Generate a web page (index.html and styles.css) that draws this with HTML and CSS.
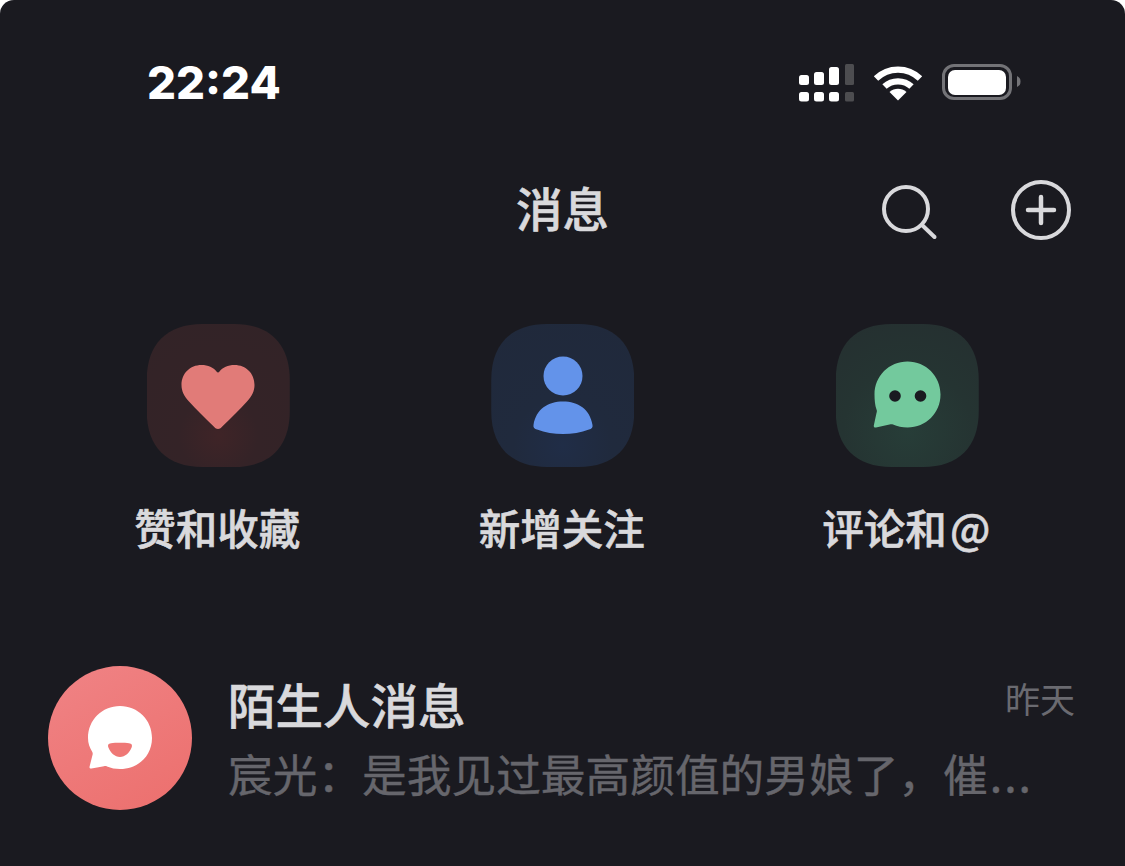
FILE: index.html
```html
<!DOCTYPE html>
<html lang="zh-CN">
<head>
<meta charset="utf-8">
<title>消息</title>
<link rel="stylesheet" href="styles.css">
</head>
<body>
<div class="app">
  <div class="status">
    <span class="time">22:24</span>
    <div class="status-icons">
      <svg class="sig" width="56" height="38" viewBox="0 0 56 38">
        <g fill="#fff">
          <rect x="0" y="11" width="10" height="10" rx="2.500"/><rect x="0" y="28" width="10" height="9.500" rx="2.500"/>
          <rect x="15" y="8" width="10" height="13" rx="2.500"/><rect x="15" y="28" width="10" height="9.500" rx="2.500"/>
          <rect x="30" y="3" width="10" height="18" rx="2.500"/><rect x="30" y="28" width="10" height="9.500" rx="2.500"/>
        </g>
        <g fill="#4d4d50">
          <rect x="46" y="0" width="9" height="21" rx="1.500"/><rect x="46" y="28" width="9" height="9.500" rx="1.500"/>
        </g>
      </svg>
      <svg class="wifi" width="50" height="36" viewBox="0 0 50 36">
        <g fill="none" stroke="#fff" stroke-width="6.400">
          <path d="M3 13.500C15.500 1.600 34.500 1.600 47 13.500"/>
          <path d="M11.500 21.500C19 14.600 31 14.600 38.500 21.500"/>
        </g>
        <path d="M25 35.500L16.500 27C21.500 22.600 28.500 22.600 33.500 27Z" fill="#fff"/>
      </svg>
      <svg class="batt" width="79" height="38" viewBox="0 0 79 38">
        <rect x="1.500" y="1.500" width="67" height="33" rx="10.500" fill="none" stroke="#737377" stroke-width="3"/>
        <rect x="6" y="6" width="58" height="25" rx="7" fill="#fff"/>
        <path d="M75 12C78 13.500 78.500 15 78.500 17.500S78 21.500 75 23Z" fill="#737377"/>
      </svg>
    </div>
  </div>

  <header class="nav">
    <h1 class="title">消息</h1>
    <svg class="ic-search" width="58" height="58" viewBox="0 0 58 58">
      <circle cx="24" cy="25" r="22" fill="none" stroke="#d9d9dc" stroke-width="4"/>
      <path d="M40 41L52.500 53" stroke="#d9d9dc" stroke-width="4" stroke-linecap="round"/>
    </svg>
    <svg class="ic-plus" width="60" height="60" viewBox="0 0 60 60">
      <circle cx="30" cy="30" r="28" fill="none" stroke="#d9d9dc" stroke-width="4"/>
      <path d="M17 30H43M30 17V43" stroke="#d9d9dc" stroke-width="4.500" stroke-linecap="round"/>
    </svg>
  </header>

  <section class="shortcuts">
    <div class="shortcut">
      <div class="tile tile-red">
        <svg class="glyph-heart" width="74" height="66" viewBox="0 0 74 66">
          <path d="M37 65C35.500 65 34.300 64.200 33 62.800C24 54 15 45.500 8 37.500C3 32 .500 27 .500 21C.500 9.500 9 1 20.500 1C27 1 32.500 3.500 35.500 7.500C36.500 8.800 37.500 8.800 38.500 7.500C41.500 3.500 47 1 53.500 1C65 1 73.500 9.500 73.500 21C73.500 27 71 32 66 37.500C59 45.500 50 54 41 62.800C39.700 64.200 38.500 65 37 65Z" fill="#e17b78"/>
        </svg>
      </div>
      <span class="label">赞和收藏</span>
    </div>
    <div class="shortcut">
      <div class="tile tile-blue">
        <svg width="60" height="80" viewBox="0 0 60 80">
          <circle cx="30" cy="20" r="19.500" fill="#6393ea"/>
          <path d="M.500 69C3 53 15 45.500 30 45.500S57 53 59.500 69C60 71.500 58.500 73 56 73.500C40 79.500 20 79.500 4 73.500C1.500 73 0 71.500 .500 69Z" fill="#6393ea"/>
        </svg>
      </div>
      <span class="label">新增关注</span>
    </div>
    <div class="shortcut">
      <div class="tile tile-green">
        <svg class="glyph-chat" width="68" height="68" viewBox="0 0 68 68">
          <path d="M34.500 .500C53 .500 67.500 15 67.500 33.500S53 66.500 34.500 66.500C29 66.500 24.500 65.500 20 63.500C19 63 18 63 16.500 63.500L3 66.500C1.500 66.800 .500 66 .800 64.500L3.500 52C4 50.500 4 49.500 3.500 48.500C2 44.500 1.500 39 1.500 33.500C1.500 15 16 .500 34.500 .500Z" fill="#73c99d"/>
          <circle cx="22" cy="35" r="5.800" fill="#1a1a20"/>
          <circle cx="47.500" cy="35" r="5.800" fill="#1a1a20"/>
        </svg>
      </div>
      <span class="label label-at">评论和 @</span>
    </div>
  </section>

  <section class="row">
    <div class="avatar">
      <svg width="64" height="64" viewBox="0 0 64 64">
        <path d="M32 0C50 0 64 14 64 32S50 63 32 63C27.500 63 23 62.200 19 60.500C18 60 17 60 16 60.300L3.500 62.500C2 62.800 1.200 61.800 1.600 60.500L4.500 49C4.800 48 4.800 47 4.300 46C1.500 41.500 0 37 0 32C0 14 14 0 32 0Z" fill="#fff"/>
        <path d="M23 37.200C27.500 36.600 36.500 36.600 41 37.200C43.800 37.600 44.600 39 43.600 41.500C41.800 46.500 37 51 32 51S22.200 46.500 20.400 41.500C19.400 39 20.200 37.600 23 37.200Z" fill="#ef7876"/>
      </svg>
    </div>
    <div class="row-body">
      <div class="row-top">
        <span class="row-title">陌生人消息</span>
        <span class="row-date">昨天</span>
      </div>
      <p class="row-msg">宸光&#xFF1A;是我见过最高颜值的男娘了&#xFF0C;催<span class="ell">...</span></p>
    </div>
  </section>
</div>
</body>
</html>
```
FILE: styles.css
```css
* { box-sizing: border-box; }
html, body { margin: 0; height: 100%; background: #fff; }
body { overflow: hidden; }
.app {
  width: 1125px;
  height: 866px;
  padding-top: 51px;
  background: #1a1a20;
  border-radius: 14px 14px 0 0;
  overflow: hidden;
  font-family: "Noto Sans CJK SC", "Noto Sans", sans-serif;
}
.status {
  display: flex;
  justify-content: space-between;
  align-items: center;
  height: 64px;
  padding: 0 104px 0 147px;
}
.time {
  font-family: Inter, "Liberation Sans", sans-serif;
  font-size: 45.500px;
  font-weight: 800;
  color: #fff;
  line-height: 64px;
}
.status-icons { display: flex; align-items: center; }
.sig { margin-right: 18px; }
.wifi { margin-right: 19px; }
.nav {
  display: flex;
  align-items: center;
  height: 64px;
  margin-top: 63px;
  padding-left: 516px;
}
.title {
  margin: 0;
  padding-bottom: 6px;
  font-size: 46.500px;
  font-weight: 500;
  -webkit-text-stroke: 0.6px #d9d9dc;
  color: #d9d9dc;
  line-height: 58px;
}
.ic-search { margin-left: 273px; margin-top: 5px; }
.ic-plus { margin-left: 71px; }
.shortcuts {
  display: flex;
  margin-top: 82px;
  padding-left: 46px;
}
.shortcut {
  width: 344.500px;
  display: flex;
  flex-direction: column;
  align-items: center;
}
.tile {
  width: 143px;
  height: 143px;
  clip-path: path("M56 0H87C123 0 143 20 143 56V87C143 123 123 143 87 143H56C20 143 0 123 0 87V56C0 20 20 0 56 0Z");
  display: flex;
  align-items: center;
  justify-content: center;
}
.glyph-heart { margin-top: 3px; }
.glyph-chat { margin-top: -1px; }
.tile-red { background: radial-gradient(circle at 50% 78%, #3f2427 0, #342327 30%, #322327 100%); }
.tile-blue { background: radial-gradient(circle at 50% 85%, #202d47 0, #202a3d 35%, #20293b 100%); }
.tile-green { background: radial-gradient(circle at 50% 75%, #273d38 0, #253432 50%, #252f30 100%); }
.label {
  margin: 32px 2px 0 0;
  font-size: 41.500px;
  font-weight: 500;
  -webkit-text-stroke: 0.6px #d9d9dc;
  line-height: 56px;
  color: #d9d9dc;
  white-space: nowrap;
}
.label-at { word-spacing: -6px; }
.row {
  display: flex;
  margin-top: 111px;
  padding: 0 50px 0 48px;
}
.avatar {
  width: 144px;
  height: 144px;
  flex: none;
  border-radius: 50%;
  background: linear-gradient(150deg, #f08385, #ec6f6d);
  display: flex;
  align-items: center;
  justify-content: center;
}
.row-body { margin-left: 36px; flex: 1; min-width: 0; margin-top: 7px; }
.row-top { display: flex; justify-content: space-between; align-items: flex-start; }
.row-title {
  font-size: 47.500px;
  font-weight: 500;
  -webkit-text-stroke: 0.6px #d9d9dc;
  line-height: 62px;
  color: #d9d9dc;
}
.row-date {
  font-size: 35px;
  line-height: 50px;
  color: #6a6a70;
}
.row-msg {
  margin: 7px 0 0;
  font-size: 44.700px;
  line-height: 62px;
  -webkit-text-stroke: 0.4px #66666c;
  color: #66666c;
  white-space: nowrap;
}
.ell { letter-spacing: 2px; margin-left: 2px; }
```
